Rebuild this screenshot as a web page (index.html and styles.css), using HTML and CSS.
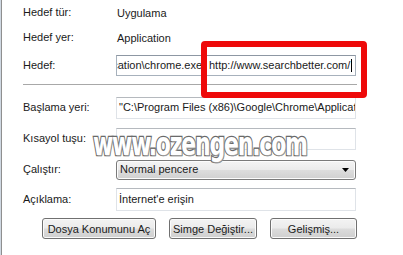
FILE: index.html
```html
<!DOCTYPE html>
<html lang="tr">
<head>
<meta charset="utf-8">
<link rel="stylesheet" href="styles.css">
</head>
<body>
<div class="window">
  <div class="row info">
    <span class="label">Hedef tür:</span>
    <span class="value">Uygulama</span>
  </div>
  <div class="row info r2">
    <span class="label">Hedef yer:</span>
    <span class="value">Application</span>
  </div>
  <div class="row r3">
    <span class="label">Hedef:</span>
    <div class="box focus target">
      <span class="clip"><span>"C:\Program Files (x86)\Google\Chrome\Application\chrome.exe"</span></span>
      <span class="url">http://www.searchbetter.com/</span><span class="caret"></span>
    </div>
  </div>
  <div class="sep"></div>
  <div class="row r4">
    <span class="label">Başlama yeri:</span>
    <div class="box"><span class="txt">"C:\Program Files (x86)\Google\Chrome\Application"</span></div>
  </div>
  <div class="row r5">
    <span class="label">Kısayol tuşu:</span>
    <div class="box"></div>
  </div>
  <div class="row r6">
    <span class="label">Çalıştır:</span>
    <div class="combo"><span class="txt">Normal pencere</span>
      <svg class="arrow" width="7" height="4" viewBox="0 0 7 4"><path d="M0 0H7L3.5 4Z" fill="#000"/></svg>
    </div>
  </div>
  <div class="row r7">
    <span class="label">Açıklama:</span>
    <div class="box"><span class="txt">İnternet'e erişin</span></div>
  </div>
  <div class="buttons">
    <button class="btn b1">Dosya Konumunu Aç</button>
    <button class="btn b2">Simge Değiştir...</button>
    <button class="btn b3">Gelişmiş...</button>
  </div>
  <div class="redmark"></div>
  <div class="watermark">www.ozengen.com</div>
</div>
</body>
</html>
```
FILE: styles.css
```css
html, body {
  margin: 0;
  padding: 0;
  background: #fff;
}
body {
  width: 403px;
  height: 255px;
  overflow: hidden;
  font-family: "Liberation Sans", Arial, sans-serif;
  font-size: 11px;
  color: #1a1a1a;
}
.window {
  position: relative;
  height: 255px;
  margin-left: 1px;
  border-left: 1px solid #8f8f8f;
  box-shadow: -1px 0 0 #cfd8e2;
  padding-top: 3px;
  box-sizing: border-box;
}
.row {
  display: grid;
  grid-template-columns: 93px 240px;
  align-items: center;
  padding-left: 21px;
}
.info { height: 20px; }
.label { white-space: nowrap; position: relative; top: -1px; }
.value { padding-left: 1px; }
.r2 { margin-top: 5px; }
.r3 { margin-top: 7px; height: 21px; }
.r4 { margin-top: 12px; height: 22px; }
.r5 { margin-top: 9px; height: 22px; }
.r6 { margin-top: 10px; height: 20px; }
.r7 { margin-top: 8px; height: 23px; }
.box {
  height: 100%;
  box-sizing: border-box;
  border: 1px solid #dfe3e8;
  border-top-color: #b5b9be;
  display: flex;
  align-items: center;
  padding-left: 2px;
  overflow: hidden;
  white-space: nowrap;
}
.box.focus {
  border-color: #a7b1bc;
  border-top-color: #8d97a3;
}
.txt { position: relative; top: -1px; }
.target { padding-left: 0; }
.clip {
  width: 89px;
  flex: none;
  display: flex;
  justify-content: flex-end;
  overflow: hidden;
  position: relative;
  top: -1px;
}
.clip span { flex: none; }
.url {
  margin-left: 3px;
  position: relative;
  top: -1px;
}
.caret {
  width: 1px;
  height: 13px;
  background: #000;
  margin-left: 1px;
}
.sep {
  margin: 8px 0 0 21px;
  width: 334px;
  height: 1px;
  background: #a8a8a8;
}
.combo {
  height: 100%;
  box-sizing: border-box;
  border: 1px solid #7a7a7a;
  border-radius: 3px;
  background: linear-gradient(#f4f4f4 0%, #ebebeb 48%, #dddddd 52%, #d0d0d0 100%);
  display: flex;
  align-items: center;
  justify-content: space-between;
  padding: 0 6px 0 3px;
  box-shadow: inset 0 0 0 1px #fcfcfc;
}
.arrow { flex: none; }
.buttons {
  display: flex;
  justify-content: flex-end;
  gap: 13px;
  width: 355px;
  margin-top: 7px;
}
.btn {
  height: 21px;
  margin: 0;
  padding: 0;
  font-family: "Liberation Sans", Arial, sans-serif;
  font-size: 11px;
  color: #1a1a1a;
  border: 1px solid #707070;
  border-radius: 3px;
  background: linear-gradient(#f3f3f3 0%, #ebebeb 48%, #dcdcdc 52%, #cfcfcf 100%);
  box-shadow: inset 0 0 0 1px #fbfbfb;
}
.b1 { width: 114px; }
.b2 { width: 88px; }
.b3 { width: 87px; }
.redmark {
  position: absolute;
  left: 199px;
  top: 41px;
  width: 166px;
  height: 57px;
  box-sizing: border-box;
  border: 6px solid #ee0a0a;
  border-radius: 4px;
}
.watermark {
  position: absolute;
  left: 91px;
  top: 128px;
  font-family: "DejaVu Sans Condensed", "DejaVu Sans", sans-serif;
  font-weight: bold;
  font-size: 32px;
  line-height: 1;
  letter-spacing: -1.5px;
  color: #fff;
  -webkit-text-stroke: 2.6px #6a6a6a;
  paint-order: stroke fill;
  text-shadow: 1px 1px 1px #a0a0a0;
  transform-origin: left top;
  transform: scaleX(0.76);
  white-space: nowrap;
}
```
